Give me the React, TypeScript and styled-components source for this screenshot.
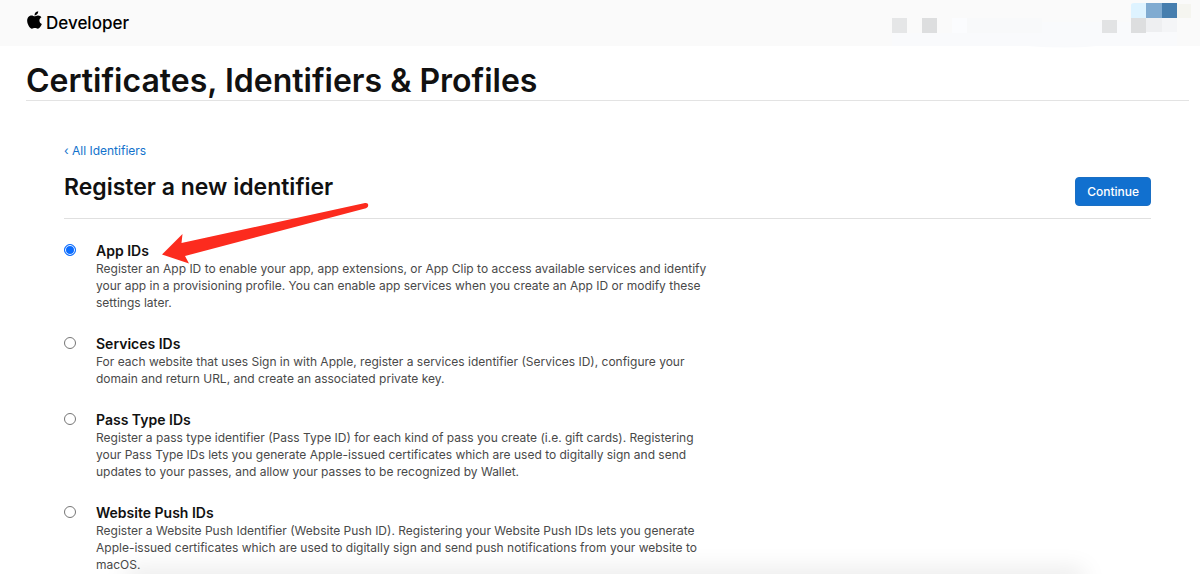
import React, { useState } from "react";
import styled, { createGlobalStyle } from "styled-components";
import { FaApple } from "react-icons/fa";

const GlobalStyle = createGlobalStyle`
  *, *::before, *::after { box-sizing: border-box; }
  body {
    margin: 0;
    background: #fff;
    color: #111;
    font-family: Inter, "Liberation Sans", sans-serif;
    font-size: 12px;
    line-height: 17px;
  }
  h1, h2, p { margin: 0; }
`;

const Page = styled.div`
  position: relative;
  overflow: hidden;
`;

const Header = styled.header`
  position: relative;
  display: flex;
  align-items: center;
  height: 46px;
  padding: 0 26px;
  background: #fafafa;
`;

const Brand = styled.a`
  display: flex;
  align-items: center;
  gap: 3px;
  color: #000;
  font-size: 17px;
  font-weight: 500;
  line-height: 24px;
  text-decoration: none;
`;

const BrandIcon = styled(FaApple)`
  width: 17px;
  height: 20px;
  margin-bottom: 6px;
`;

const Mosaic = styled.svg`
  position: absolute;
  top: 0;
  right: 0;
`;

const TitleBar = styled.div`
  margin: 0 11px 0 26px;
  padding-top: 16px;
  border-bottom: 1px solid #e3e3e3;
`;

const PageTitle = styled.h1`
  font-size: 32px;
  font-weight: 600;
  line-height: 38px;
`;

const Content = styled.main`
  padding: 41px 49px 0 64px;
`;

const BackLink = styled.a`
  color: #1272cc;
  text-decoration: none;
`;

const SectionBar = styled.div`
  display: flex;
  justify-content: space-between;
  align-items: flex-start;
  margin-top: 14px;
  padding-bottom: 12px;
  border-bottom: 1px solid #e0e0e0;
`;

const SectionTitle = styled.h2`
  font-size: 23px;
  font-weight: 600;
  line-height: 28px;
`;

const ContinueButton = styled.button`
  margin-top: 4px;
  height: 29px;
  padding: 0 11px;
  border: 1px solid #1a6fc4;
  border-radius: 4px;
  background: #1170cf;
  color: #fff;
  font: 500 12px Inter, "Liberation Sans", sans-serif;
`;

const Options = styled.form`
  display: flex;
  flex-direction: column;
  gap: 24px;
  padding-top: 23px;
`;

const Option = styled.label`
  display: flex;
  align-items: flex-start;
  gap: 20px;
`;

const Radio = styled.input`
  appearance: none;
  flex: none;
  width: 12px;
  height: 12px;
  margin: 2px 0 0;
  border: 1px solid ${(p) => (p.checked ? "#0a6cff" : "#767676")};
  border-radius: 50%;
  background: ${(p) => (p.checked ? "#0a6cff" : "#fff")};
  box-shadow: inset 0 0 0 1px #fff;
`;

const OptionText = styled.span`
  display: block;
  max-width: 616px;
  color: #494949;
`;

const OptionName = styled.strong`
  display: block;
  color: #111;
  font-size: 14px;
  font-weight: 600;
  line-height: 18px;
`;

const Arrow = styled.svg`
  position: absolute;
  top: 200px;
  left: 160px;
`;

const BottomShade = styled.div`
  position: fixed;
  left: 130px;
  right: 120px;
  bottom: -10px;
  height: 10px;
  box-shadow: 0 0 24px 4px rgba(0, 0, 0, 0.1);
  pointer-events: none;
`;

const options = [
  {
    name: "App IDs",
    text: "Register an App ID to enable your app, app extensions, or App Clip to access available services and identify your app in a provisioning profile. You can enable app services when you create an App ID or modify these settings later.",
  },
  {
    name: "Services IDs",
    text: "For each website that uses Sign in with Apple, register a services identifier (Services ID), configure your domain and return URL, and create an associated private key.",
  },
  {
    name: "Pass Type IDs",
    text: "Register a pass type identifier (Pass Type ID) for each kind of pass you create (i.e. gift cards). Registering your Pass Type IDs lets you generate Apple-issued certificates which are used to digitally sign and send updates to your passes, and allow your passes to be recognized by Wallet.",
  },
  {
    name: "Website Push IDs",
    text: "Register a Website Push Identifier (Website Push ID). Registering your Website Push IDs lets you generate Apple-issued certificates which are used to digitally sign and send push notifications from your website to macOS.",
  },
];

export default function App() {
  const [selected, setSelected] = useState(options[0].name);
  return (
    <Page>
      <GlobalStyle />
      <Header>
        <Brand href="#">
          <BrandIcon aria-hidden="true" />
          Developer
        </Brand>
        <Mosaic width="330" height="48" viewBox="0 0 330 48" aria-hidden="true">
          <path d="M22 33h150v-11h90v-4h45v28h-80q-30 3-70 0H22z" fill="#f9fafc" />
          <path d="M97 18h75v15H97z" fill="#f8f9fa" />
          <path d="M22 18h15v15H22z" fill="#e5e6e7" />
          <path d="M52 18h15v15H52z" fill="#dddedf" />
          <path d="M82 18h15v15H82z" fill="#fbfcfe" />
          <path d="M232 20h15v13h-15z" fill="#e2e3e4" />
          <path d="M261 18h15v15h-15z" fill="#dddedf" />
          <path d="M276 18h16v14h-16z" fill="#eeeff1" />
          <path d="M292 18h15v14h-15z" fill="#f4f5f7" />
          <path d="M261 5q0-2 3-2h12v15h-15z" fill="#def3ff" />
          <path d="M276 3h16v15h-16z" fill="#80abd1" />
          <path d="M292 3h15v15h-15z" fill="#467eae" />
          <path d="M307 4h14v14h-14z" fill="#f5f5f0" />
        </Mosaic>
      </Header>
      <TitleBar>
        <PageTitle>Certificates, Identifiers &amp; Profiles</PageTitle>
      </TitleBar>
      <Content>
        <BackLink href="#">‹ All Identifiers</BackLink>
        <SectionBar>
          <SectionTitle>Register a new identifier</SectionTitle>
          <ContinueButton type="button">Continue</ContinueButton>
        </SectionBar>
        <Options>
          {options.map((o) => (
            <Option key={o.name}>
              <Radio
                type="radio"
                name="identifier"
                checked={selected === o.name}
                onChange={() => setSelected(o.name)}
              />
              <OptionText>
                <OptionName>{o.name}</OptionName>
                {o.text}
              </OptionText>
            </Option>
          ))}
        </Options>
      </Content>
      <Arrow width="212" height="68" viewBox="0 0 212 68" aria-hidden="true">
        <path
          d="M2 54.500L22.500 34L21.500 43L205 3Q208 2.500 208.300 5Q208.300 7.500 206 8.200L25 56L29 63.500Z"
          fill="#fc2b1e"
        />
      </Arrow>
      <BottomShade />
    </Page>
  );
}
